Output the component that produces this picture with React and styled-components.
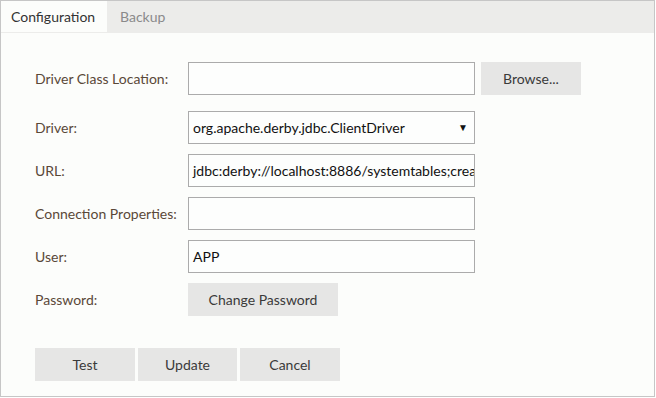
import React from "react";
import styled, { createGlobalStyle } from "styled-components";

const Global = createGlobalStyle`
  html, body { margin: 0; padding: 0; background: #ffffff; }
  body { font-family: Lato, "Open Sans", sans-serif; }
  * { box-sizing: border-box; }
`;

const Frame = styled.div`
  width: 655px;
  height: 397px;
  border: 1px solid #c6c6c6;
  background: #fcfdfb;
  display: flex;
  flex-direction: column;
`;

const TabBar = styled.div`
  height: 32px;
  background: #ececea;
  display: flex;
`;

const Tab = styled.div`
  width: ${(p) => p.$w}px;
  height: 31px;
  display: flex;
  align-items: center;
  padding-left: ${(p) => p.$pl}px;
  font-size: 14px;
  color: ${(p) => (p.$active ? "#333333" : "#8a8a8a")};
  background: ${(p) => (p.$active ? "#fcfdfb" : "transparent")};
  align-self: stretch;
`;

const Body = styled.div`
  padding: 29px 0 0 34px;
  display: flex;
  flex-direction: column;
`;

const Row = styled.div`
  display: flex;
  align-items: center;
  height: 33px;
  margin-bottom: ${(p) => p.$mb ?? 10}px;
`;

const Label = styled.div`
  width: 153px;
  font-size: 14px;
  color: #5a4838;
`;

const Field = styled.div`
  width: 287px;
  height: 33px;
  border: 1px solid #ababab;
  background: #fdfefd;
  display: flex;
  align-items: center;
  padding-left: 4px;
  font-size: 14px;
  color: #111111;
  white-space: nowrap;
  overflow: hidden;
  position: relative;
`;

const Arrow = styled.span`
  position: absolute;
  right: 6px;
  top: 9px;
  font-size: 10px;
  color: #111;
`;

const Button = styled.div`
  width: ${(p) => p.$w}px;
  height: 33px;
  background: #e6e6e5;
  display: flex;
  align-items: center;
  justify-content: center;
  font-size: 14px;
  color: #3a3a3a;
  margin-left: ${(p) => p.$ml ?? 0}px;
`;

const Actions = styled.div`
  display: flex;
  gap: 3px;
  margin-top: 32px;
`;

export default function App() {
  return (
    <>
      <Global />
      <Frame>
        <TabBar>
          <Tab $w={106} $pl={10} $active>Configuration</Tab>
          <Tab $w={100} $pl={13}>Backup</Tab>
        </TabBar>
        <Body>
          <Row $mb={16}>
            <Label>Driver Class Location:</Label>
            <Field />
            <Button $w={100} $ml={6}>Browse...</Button>
          </Row>
          <Row>
            <Label>Driver:</Label>
            <Field>
              org.apache.derby.jdbc.ClientDriver
              <Arrow>▼</Arrow>
            </Field>
          </Row>
          <Row>
            <Label>URL:</Label>
            <Field>jdbc:derby://localhost:8886/systemtables;create=true</Field>
          </Row>
          <Row>
            <Label>Connection Properties:</Label>
            <Field />
          </Row>
          <Row>
            <Label>User:</Label>
            <Field>APP</Field>
          </Row>
          <Row $mb={0}>
            <Label>Password:</Label>
            <Button $w={150}>Change Password</Button>
          </Row>
          <Actions>
            <Button $w={100}>Test</Button>
            <Button $w={99}>Update</Button>
            <Button $w={100}>Cancel</Button>
          </Actions>
        </Body>
      </Frame>
    </>
  );
}
